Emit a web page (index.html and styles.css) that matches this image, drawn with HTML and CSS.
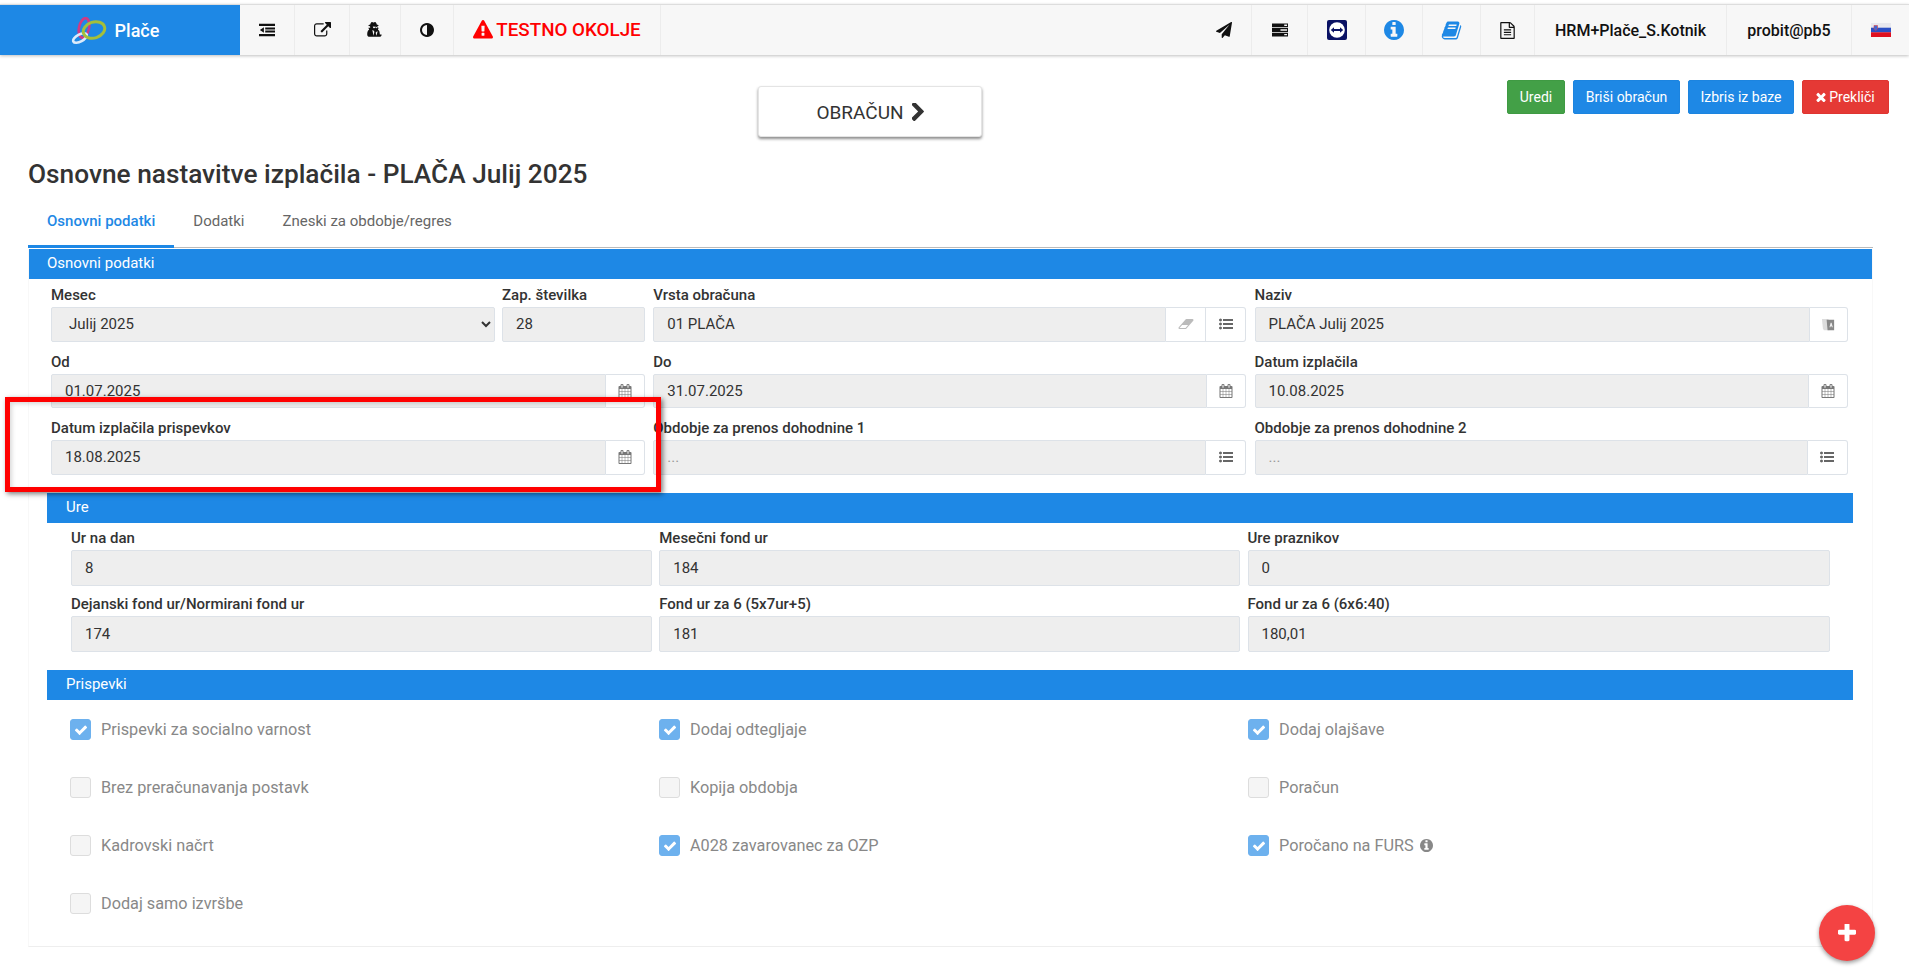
FILE: index.html
```html
<!DOCTYPE html>
<html>
<head>
<meta charset="utf-8" />
<title>Plače</title>
<link rel="stylesheet" href="styles.css">
</head>
<body>
<svg class="sprites" xmlns="http://www.w3.org/2000/svg">
  <symbol id="i-calendar" viewBox="0 0 1664 1792"><path d="M128 1664h288v-288h-288v288zm352 0h320v-288h-320v288zm-352-352h288v-320h-288v320zm352 0h320v-320h-320v320zm-352-384h288v-288h-288v288zm736 736h320v-288h-320v288zm-384-736h320v-288h-320v288zm768 736h288v-288h-288v288zm-384-352h320v-320h-320v320zm-352-864v-288q0-13-9.500-22.500t-22.500-9.500h-64q-13 0-22.500 9.500t-9.500 22.500v288q0 13 9.500 22.500t22.500 9.500h64q13 0 22.500-9.500t9.500-22.500zm736 864h288v-320h-288v320zm-384-384h320v-288h-320v288zm384 0h288v-288h-288v288zm32-480v-288q0-13-9.500-22.500t-22.500-9.500h-64q-13 0-22.500 9.500t-9.500 22.500v288q0 13 9.500 22.500t22.500 9.500h64q13 0 22.500-9.500t9.500-22.500zm384-64v1280q0 52-38 90t-90 38h-1408q-52 0-90-38t-38-90v-1280q0-52 38-90t90-38h128v-96q0-66 47-113t113-47h64q66 0 113 47t47 113v96h384v-96q0-66 47-113t113-47h64q66 0 113 47t47 113v96h128q52 0 90 38t38 90z"/></symbol>
  <symbol id="i-list" viewBox="0 0 1792 1792"><path d="M384 1408q0 80-56 136t-136 56-136-56-56-136 56-136 136-56 136 56 56 136zm0-512q0 80-56 136t-136 56-136-56-56-136 56-136 136-56 136 56 56 136zm1408 416v192q0 13-9.500 22.500t-22.500 9.500h-1216q-13 0-22.500-9.500t-9.500-22.500v-192q0-13 9.500-22.500t22.500-9.500h1216q13 0 22.500 9.500t9.500 22.500zm-1408-928q0 80-56 136t-136 56-136-56-56-136 56-136 136-56 136 56 56 136zm1408 416v192q0 13-9.500 22.500t-22.500 9.500h-1216q-13 0-22.500-9.500t-9.500-22.500v-192q0-13 9.500-22.500t22.500-9.500h1216q13 0 22.500 9.500t9.500 22.500zm0-512v192q0 13-9.500 22.500t-22.500 9.500h-1216q-13 0-22.500-9.500t-9.500-22.500v-192q0-13 9.500-22.500t22.500-9.500h1216q13 0 22.500 9.500t9.500 22.500z"/></symbol>
  <symbol id="i-info" viewBox="128 128 1536 1536"><path d="M1152 1376v-160q0-14-9-23t-23-9h-96v-512q0-14-9-23t-23-9h-320q-14 0-23 9t-9 23v160q0 14 9 23t23 9h96v320h-96q-14 0-23 9t-9 23v160q0 14 9 23t23 9h448q14 0 23-9t9-23zm-128-896v-160q0-14-9-23t-23-9h-192q-14 0-23 9t-9 23v160q0 14 9 23t23 9h192q14 0 23-9t9-23zm640 416q0 209-103 385.500t-279.500 279.500-385.500 103-385.500-103-279.500-279.500-103-385.500 103-385.500 279.500-279.500 385.500-103 385.500 103 279.500 279.500 103 385.500z"/></symbol>
  <symbol id="i-check" viewBox="0 0 1792 1792"><path d="M1671 566q0 40-28 68l-724 724-136 136q-28 28-68 28t-68-28l-136-136-362-362q-28-28-28-68t28-68l136-136q28-28 68-28t68 28l294 295 656-657q28-28 68-28t68 28l136 136q28 28 28 68z"/></symbol>
</svg>

<nav class="navbar">
  <div class="brand">
    <svg class="logo" viewBox="0 0 36 27">
      <ellipse cx="13" cy="11" rx="5" ry="10" transform="rotate(12 13 11)" fill="none" stroke="#d03a84" stroke-width="2.6"/>
      <ellipse cx="9" cy="21" rx="7.500" ry="3.500" transform="rotate(-28 9 21)" fill="none" stroke="#dcebfa" stroke-width="2.6"/>
      <ellipse cx="23" cy="13" rx="11" ry="8" transform="rotate(-18 23 13)" fill="none" stroke="#a5bf3a" stroke-width="3"/>
    </svg>
    <span>Plače</span>
  </div>
  <div class="nav-item w55">
    <svg class="ico" viewBox="0 0 18 16"><path d="M0 1h18v2.500H0zM7 5.200h11v2.200H7zM7 8.700h11v2.200H7zM0 12.500h18V15H0zM5.500 4.800v6.400L1 8z"/></svg>
  </div>
  <div class="nav-item w55">
    <svg class="ico ext" viewBox="0 0 1792 1792"><path d="M1408 928v320q0 119-84.500 203.500t-203.500 84.500h-832q-119 0-203.500-84.500t-84.500-203.500v-832q0-119 84.500-203.500t203.500-84.500h704q14 0 23 9t9 23v64q0 14-9 23t-23 9h-704q-66 0-113 47t-47 113v832q0 66 47 113t113 47h832q66 0 113-47t47-113v-320q0-14 9-23t23-9h64q14 0 23 9t9 23zm384-864v512q0 26-19 45t-45 19-45-19l-176-176-652 652q-10 10-23 10t-23-10l-114-114q-10-10-10-23t10-23l652-652-176-176q-19-19-19-45t19-45 45-19h512q26 0 45 19t19 45z"/></svg>
  </div>
  <div class="nav-item w51">
    <svg class="ico" viewBox="128 0 1536 1792"><path fill-rule="evenodd" d="M728 1536l96-448-96-128-128-64zm336 0l128-512-128 64-96 128zm160-1010q-2-4-4-6-10-8-96-8-70 0-167 19-7 2-21 2t-21-2q-97-19-167-19-86 0-96 8-2 2-4 6 2 18 4 27 2 3 7.500 6.500t7.500 10.500q2 4 7.500 20.500t7 20.500 7.500 17 8.500 17 9 14 12 13.500 14 9.500 17.500 8 20.500 4 24.500 2q36 0 59-12.500t32.500-30 14.500-34.500 11.500-29.500 17.500-12.500h12q11 0 17.500 12.500t11.500 29.500 14.500 34.500 32.500 30 59 12.500q13 0 24.500-2t20.500-4 17.500-8 14-9.500 12-13.500 9-14 8.500-17 7.500-17 7-20.500 7.500-20.500q2-7 7.500-10.500t7.500-6.500q2-9 4-27zm416 879q0 121-73 190t-194 69h-1082q-121 0-194-69t-73-190q0-61 4.500-118t19-125.500 37.500-123.500 63.500-103.500 93.500-74.500l-90-220h214q-22-64-22-128 0-12 2-32-194-40-194-96 0-57 210-99 17-62 51.500-134t70.500-114q32-37 76-37 30 0 84 31t84 31 84-31 84-31q44 0 76 36 36 42 70.500 114t51.500 134q210 42 210 99 0 56-194 96 7 81-20 160h214l-82 225q63 33 107.500 96.500t65.500 143.500 29 151.500 8 148.500z"/></svg>
  </div>
  <div class="nav-item w53">
    <svg class="ico adj" viewBox="128 128 1536 1536"><path d="M896 1440v-1088q-148 0-273 73t-198 198-73 273 73 273 198 198 273 73zm768-544q0 209-103 385.500t-279.500 279.500-385.500 103-385.500-103-279.500-279.500-103-385.500 103-385.500 279.500-279.500 385.500-103 385.500 103 279.500 279.500 103 385.500z"/></svg>
  </div>
  <div class="nav-item warn">
    <svg class="warn-ico" viewBox="0 0 1792 1792"><path d="M1024 1375v-190q0-14-9.500-23.500t-22.500-9.500h-192q-13 0-22.500 9.500t-9.500 23.500v190q0 14 9.500 23.500t22.500 9.500h192q13 0 22.500-9.500t9.500-23.500zm-2-374l18-459q0-12-10-19-13-11-24-11h-220q-11 0-24 11-10 7-10 21l17 457q0 10 10 16.500t24 6.500h185q14 0 23.500-6.500t10.500-16.500zm-14-934l768 1408q35 63-2 126-17 29-46.500 46t-63.500 17h-1536q-34 0-63.500-17t-46.500-46q-37-63-2-126l768-1408q17-31 47-49t65-18 65 18 47 49z"/></svg>
    <span>TESTNO OKOLJE</span>
  </div>

  <div class="nav-item right-start w56">
    <svg class="ico" viewBox="0 0 1792 1792"><path d="M1764 11q33 24 27 64l-256 1536q-5 29-32 45-14 8-31 8-11 0-24-5l-453-185-242 295q-18 23-49 23-13 0-22-4-19-7-30.500-23.500t-11.500-36.500v-349l864-1059-1069 925-395-162q-37-14-40-55-2-40 32-59l1664-960q15-9 32-9 20 0 36 11z"/></svg>
  </div>
  <div class="nav-item w56">
    <svg class="ico" viewBox="0 0 17 16"><path fill-rule="evenodd" d="M0 1h17v4H0zM13 2.200v1.500h3V2.200zM0 6h17v4H0zM9 7.200v1.500h7V7.200zM0 11h17v4H0zM13 12.200v1.500h3v-1.500z"/></svg>
  </div>
  <div class="nav-item w58">
    <svg class="tv" viewBox="0 0 20 20">
      <rect width="20" height="20" rx="2" fill="#0a1264"/>
      <circle cx="10" cy="10" r="7.800" fill="#fff"/>
      <path d="M3.800 10 7 7.300v1.800h6V7.300l3.200 2.700-3.200 2.700v-1.800H7v1.800z" fill="#0a1264"/>
    </svg>
  </div>
  <div class="nav-item w57">
    <svg class="info-big"><use href="#i-info"/></svg>
  </div>
  <div class="nav-item w58">
    <svg class="book" viewBox="0 0 1792 1792"><path d="M1703 478q40 57 18 129l-275 906q-19 64-76.500 107.500t-122.500 43.500h-923q-77 0-148.500-53.500t-99.500-131.500q-24-67-2-127 0-4 3-27t4-37q1-8-3-21.500t-3-19.500q2-11 8-21t16.500-23.500 16.500-23.500q23-38 45-91.500t30-91.500q3-10 .5-30t-.5-28q3-11 17-28t17-23q21-36 42-92t25-90q1-9-2.500-32t.5-28q4-13 22-30.500t22-22.500q19-26 42.500-84.500t27.500-96.500q1-8-3-25.500t-2-26.500q2-8 9-18t18-23 17-21q8-12 16.500-30.500t15-35 16-36 19.500-32 26.500-23.500 36-11.500 47.500 5.500l-1 3q38-9 51-9h761q74 0 114 56t18 130l-274 906q-36 119-71.500 153.500t-128.500 34.500h-869q-27 0-38 15-11 16-1 43 24 70 144 70h923q29 0 56-15.500t35-41.500l300-987q7-22 5-57 38 15 59 43zm-1064 2q-4 13 2 22.500t20 9.500h608q13 0 25.500-9.500t16.500-22.500l21-64q4-13-2-22.500t-20-9.500h-608q-13 0-25.500 9.500t-16.500 22.500zm-83 256q-4 13 2 22.500t20 9.500h608q13 0 25.500-9.500t16.500-22.500l21-64q4-13-2-22.500t-20-9.500h-608q-13 0-25.500 9.500t-16.500 22.500z"/></svg>
  </div>
  <div class="nav-item w54">
    <svg class="ico file" viewBox="128 0 1536 1792"><path d="M1596 380q28 28 48 76t20 88v1152q0 40-28 68t-68 28h-1344q-40 0-68-28t-28-68v-1600q0-40 28-68t68-28h896q40 0 88 20t76 48zm-444-244v376h376q-10-29-22-41l-313-313q-12-12-41-22zm384 1528v-1024h-416q-40 0-68-28t-28-68v-416h-768v1536h1280zm-1024-864q0-14 9-23t23-9h704q14 0 23 9t9 23v64q0 14-9 23t-23 9h-704q-14 0-23-9t-9-23v-64zm736 224q14 0 23 9t9 23v64q0 14-9 23t-23 9h-704q-14 0-23-9t-9-23v-64q0-14 9-23t23-9h704zm0 256q14 0 23 9t9 23v64q0 14-9 23t-23 9h-704q-14 0-23-9t-9-23v-64q0-14 9-23t23-9h704z"/></svg>
  </div>
  <div class="nav-item nav-text w192">HRM+Plače_S.Kotnik</div>
  <div class="nav-item nav-text w125">probit@pb5</div>
  <div class="nav-item flag-item">
    <svg class="flag" viewBox="0 0 20 14">
      <rect width="20" height="14" fill="#e8e8ee"/>
      <rect y="4.700" width="20" height="4.700" fill="#2b4fc4"/>
      <rect y="9.300" width="20" height="4.700" fill="#e01020"/>
      <path d="M3 2.500h3.500v3.500L4.750 7.500 3 6z" fill="#3d6ad6" stroke="#e04040" stroke-width=".6"/>
    </svg>
  </div>
</nav>

<div class="toolbar">
  <button class="obracun">OBRAČUN
    <svg class="chevron" viewBox="384 128 1000 1500"><path d="M1363 877l-742 742q-19 19-45 19t-45-19l-166-166q-19-19-19-45t19-45l531-531-531-531q-19-19-19-45t19-45l166-166q19-19 45-19t45 19l742 742q19 19 19 45t-19 45z"/></svg>
  </button>
  <div class="actions">
    <button class="btn green w58b">Uredi</button>
    <button class="btn blue-btn w107">Briši obračun</button>
    <button class="btn blue-btn w106">Izbris iz baze</button>
    <button class="btn red w87">
      <svg class="x" viewBox="256 256 1280 1280"><path d="M1490 1322q0 40-28 68l-136 136q-28 28-68 28t-68-28l-294-294-294 294q-28 28-68 28t-68-28l-136-136q-28-28-28-68t28-68l294-294-294-294q-28-28-28-68t28-68l136-136q28-28 68-28t68 28l294 294 294-294q28-28 68-28t68 28l136 136q28 28 28 68t-28 68l-294 294 294 294q28 28 28 68z"/></svg>
      Prekliči
    </button>
  </div>
</div>

<h1 class="page-title">Osnovne nastavitve izplačila - PLAČA Julij 2025</h1>

<div class="tabs">
  <a class="tab active">Osnovni podatki</a>
  <a class="tab">Dodatki</a>
  <a class="tab">Zneski za obdobje/regres</a>
</div>

<div class="panel">
  <div class="bar">Osnovni podatki</div>
  <div class="form-top">
    <div class="split">
      <div class="field">
        <label>Mesec</label>
        <select class="input"><option>Julij 2025</option></select>
      </div>
      <div class="field">
        <label>Zap. številka</label>
        <input class="input" readonly value="28">
      </div>
    </div>
    <div class="field">
      <label>Vrsta obračuna</label>
      <div class="group">
        <input class="input" readonly value="01 PLAČA">
        <span class="addon"><svg class="eraser" viewBox="0 0 2048 1792"><path d="M960 1408l336-384h-768l-336 384h768zm1013-1077q15 34 9.500 71.500t-30.500 65.500l-896 1024q-38 44-96 44h-768q-38 0-69.500-20.500t-47.500-54.500q-15-34-9.500-71.500t30.500-65.500l896-1024q38-44 96-44h768q38 0 69.500 20.500t47.500 54.500z"/></svg></span>
        <span class="addon"><svg class="add-ico"><use href="#i-list"/></svg></span>
      </div>
    </div>
    <div class="field">
      <label>Naziv</label>
      <div class="group">
        <input class="input" readonly value="PLAČA Julij 2025">
        <span class="addon lang-add"><svg class="lang" viewBox="0 0 16 16"><path d="M1 2h7l1 12H3l-1-2z" fill="#ddd"/><path d="M6 3h8v11H7z" fill="#888"/><path d="M9 11l1.300-5h1l1.300 5h-1l-.3-1.200h-1L10 11z" fill="#eee"/></svg></span>
      </div>
    </div>

    <div class="field">
      <label>Od</label>
      <div class="group">
        <input class="input" readonly value="01.07.2025">
        <span class="addon cal"><svg class="add-ico cal-ico"><use href="#i-calendar"/></svg></span>
      </div>
    </div>
    <div class="field">
      <label>Do</label>
      <div class="group">
        <input class="input" readonly value="31.07.2025">
        <span class="addon cal"><svg class="add-ico cal-ico"><use href="#i-calendar"/></svg></span>
      </div>
    </div>
    <div class="field">
      <label>Datum izplačila</label>
      <div class="group">
        <input class="input" readonly value="10.08.2025">
        <span class="addon cal"><svg class="add-ico cal-ico"><use href="#i-calendar"/></svg></span>
      </div>
    </div>

    <div class="field">
      <label>Datum izplačila prispevkov</label>
      <div class="group">
        <input class="input" readonly value="18.08.2025">
        <span class="addon cal"><svg class="add-ico cal-ico"><use href="#i-calendar"/></svg></span>
      </div>
    </div>
    <div class="field">
      <label>Obdobje za prenos dohodnine 1</label>
      <div class="group">
        <input class="input" readonly placeholder="...">
        <span class="addon"><svg class="add-ico"><use href="#i-list"/></svg></span>
      </div>
    </div>
    <div class="field">
      <label>Obdobje za prenos dohodnine 2</label>
      <div class="group">
        <input class="input" readonly placeholder="...">
        <span class="addon"><svg class="add-ico"><use href="#i-list"/></svg></span>
      </div>
    </div>
  </div>

  <div class="bar sub">Ure</div>
  <div class="form-ure">
    <div class="field"><label>Ur na dan</label><input class="input tall" readonly value="8"></div>
    <div class="field"><label>Mesečni fond ur</label><input class="input tall" readonly value="184"></div>
    <div class="field"><label>Ure praznikov</label><input class="input tall" readonly value="0"></div>
    <div class="field"><label>Dejanski fond ur/Normirani fond ur</label><input class="input tall" readonly value="174"></div>
    <div class="field"><label>Fond ur za 6 (5x7ur+5)</label><input class="input tall" readonly value="181"></div>
    <div class="field"><label>Fond ur za 6 (6x6:40)</label><input class="input tall" readonly value="180,01"></div>
  </div>

  <div class="bar sub">Prispevki</div>
  <div class="checks">
    <div class="check"><span class="box on"><svg><use href="#i-check"/></svg></span>Prispevki za socialno varnost</div>
    <div class="check"><span class="box on"><svg><use href="#i-check"/></svg></span>Dodaj odtegljaje</div>
    <div class="check"><span class="box on"><svg><use href="#i-check"/></svg></span>Dodaj olajšave</div>
    <div class="check"><span class="box"></span>Brez preračunavanja postavk</div>
    <div class="check"><span class="box"></span>Kopija obdobja</div>
    <div class="check"><span class="box"></span>Poračun</div>
    <div class="check"><span class="box"></span>Kadrovski načrt</div>
    <div class="check"><span class="box on"><svg><use href="#i-check"/></svg></span>A028 zavarovanec za OZP</div>
    <div class="check"><span class="box on"><svg><use href="#i-check"/></svg></span>Poročano na FURS <svg class="hint"><use href="#i-info"/></svg></div>
    <div class="check"><span class="box"></span>Dodaj samo izvršbe</div>
  </div>
</div>

<div class="highlight"></div>
<button class="fab">
  <svg viewBox="192 192 1408 1408"><path d="M1600 736v192q0 40-28 68t-68 28h-416v416q0 40-28 68t-68 28h-192q-40 0-68-28t-28-68v-416h-416q-40 0-68-28t-28-68v-192q0-40 28-68t68-28h416v-416q0-40 28-68t68-28h192q40 0 68 28t28 68v416h416q40 0 68 28t28 68z"/></svg>
</button>
</body>
</html>
```

FILE: styles.css
```css
* {
  box-sizing: border-box;
}
html, body {
  height: 100%;
}
body {
  margin: 0;
  font-family: Roboto, "Liberation Sans", sans-serif;
  font-size: 15px;
  color: #333;
  background: #fff;
  overflow: hidden;
  position: relative;
}
.sprites {
  display: none;
}

/* navbar */
.navbar {
  display: flex;
  height: 51px;
  margin-top: 4px;
  background: #f7f7f7;
  border-top: 1px solid #ddd;
  box-shadow: 0 1px 3px rgba(0, 0, 0, 0.25);
}
.brand {
  width: 240px;
  display: flex;
  align-items: center;
  justify-content: center;
  gap: 8px;
  padding-right: 10px;
  background: #1e88e5;
  color: #fff;
  font-size: 18px;
  font-weight: 500;
}
.logo {
  width: 36px;
  height: 27px;
}
.nav-item {
  display: flex;
  align-items: center;
  justify-content: center;
  border-right: 1px solid #ececec;
  color: #111;
}
.w51 { width: 51px; }
.w53 { width: 53px; }
.w54 { width: 54px; }
.w55 { width: 55px; }
.w56 { width: 56px; }
.w57 { width: 57px; }
.w58 { width: 58px; }
.w125 { width: 125px; }
.w192 { width: 192px; }
.right-start {
  margin-left: auto;
}
.ico {
  width: 16px;
  height: 16px;
  fill: #111;
}
.ico.ext {
  width: 17px;
  height: 17px;
}
.ico.adj {
  width: 14px;
  height: 14px;
}
.ico.file {
  width: 15px;
  height: 17px;
}
.info-big {
  width: 20px;
  height: 20px;
  fill: #1e88e5;
}
.book {
  width: 21px;
  height: 21px;
  fill: #1e88e5;
}
.warn {
  width: 207px;
  gap: 3px;
  color: #f00;
  font-size: 18.8px;
  font-weight: 500;
}
.warn-ico {
  width: 20px;
  height: 20px;
  fill: #f00;
}
.tv {
  width: 20px;
  height: 20px;
}
.nav-text {
  font-size: 16px;
  font-weight: 500;
}
.flag-item {
  width: 57px;
  border-right: 0;
}
.flag {
  width: 20px;
  height: 14px;
}

/* toolbar */
.toolbar {
  display: flex;
  align-items: flex-start;
  padding: 25px 20px 0 758px;
}
.obracun {
  width: 224px;
  height: 51px;
  margin-top: 6px;
  padding: 1px 0 0;
  display: flex;
  align-items: center;
  justify-content: center;
  gap: 8px;
  background: #fff;
  border: 1px solid #e4e4e4;
  border-radius: 3px;
  box-shadow: 0 2px 3px rgba(0, 0, 0, 0.45);
  font-family: inherit;
  font-size: 19px;
  color: #333;
}
.chevron {
  width: 12px;
  height: 18px;
  fill: #333;
}
.actions {
  display: flex;
  gap: 8px;
  margin-left: auto;
}
.btn {
  height: 34px;
  padding: 0;
  display: flex;
  align-items: center;
  justify-content: center;
  gap: 3px;
  border-radius: 2px;
  font-family: inherit;
  font-size: 14px;
  color: #fff;
}
.green { background: #43a047; border: 1px solid #3f9a43; }
.blue-btn { background: #1e88e5; border: 1px solid #1c84df; }
.red { background: #e53935; border: 1px solid #df3531; }
.w58b { width: 58px; }
.w107 { width: 107px; }
.w106 { width: 106px; }
.w87 { width: 87px; }
.x {
  width: 10px;
  height: 10px;
  fill: #fff;
}

/* heading and tabs */
.page-title {
  margin: 21px 0 0 28px;
  font-size: 26.25px;
  line-height: 32px;
  font-weight: 500;
  color: #333;
}
.tabs {
  display: flex;
  height: 41px;
  margin: 17px 0 0 28px;
  width: 1845px;
  border-bottom: 1px solid #bbb;
}
.tab {
  height: 41px;
  padding: 4px 19px 0;
  line-height: 20px;
  color: #666;
}
.tab.active {
  color: #1e88e5;
  font-weight: 500;
  border-bottom: 3px solid #1e88e5;
}

/* panel */
.panel {
  width: 1845px;
  margin: 1px 0 0 28px;
  border-left: 1px solid #f8f8f8;
  border-right: 1px solid #f8f8f8;
  border-bottom: 1px solid #eee;
}
.bar {
  height: 30px;
  padding-left: 18px;
  line-height: 29px;
  background: #1e88e5;
  color: #fff;
}
.bar.sub {
  margin: 0 19px 0 18px;
  padding-left: 19px;
}
.form-top {
  display: grid;
  grid-template-columns: 594px 593px 593px;
  column-gap: 8.25px;
  row-gap: 10px;
  padding: 6px 0 18px 22px;
}
.split {
  display: grid;
  grid-template-columns: 444px 143px;
  column-gap: 7px;
}
.field label {
  display: block;
  height: 20px;
  margin-bottom: 2px;
  line-height: 20px;
  font-weight: 500;
  color: #333;
  white-space: nowrap;
}
.input {
  display: block;
  width: 100%;
  height: 34.5px;
  padding: 0 13px;
  background: #eee;
  border: 1px solid #dde2e8;
  border-radius: 2px;
  font-family: inherit;
  font-size: 15px;
  color: #333;
  outline: 0;
}
.input::placeholder {
  color: #999;
}
.input.tall {
  height: 35.5px;
}
.group {
  display: flex;
}
.group .input {
  flex: 1;
  min-width: 0;
  border-radius: 2px 0 0 2px;
}
.addon {
  width: 40px;
  height: 34.5px;
  flex: none;
  display: flex;
  align-items: center;
  justify-content: center;
  background: #fff;
  border: 1px solid #dde2e8;
  border-left: 0;
}
.addon.cal {
  width: 39px;
}
.addon.lang-add {
  width: 38px;
}
.addon:last-child {
  border-radius: 0 3px 3px 0;
}
.add-ico {
  width: 14px;
  height: 14px;
  fill: #666;
}
.cal-ico {
  fill: #777;
}
.eraser {
  width: 16px;
  height: 14px;
  fill: #bbb;
}
.lang {
  width: 15px;
  height: 15px;
}
.form-ure {
  display: grid;
  grid-template-columns: 581px 581px 582px;
  column-gap: 7.25px;
  row-gap: 8.5px;
  padding: 5.5px 0 18.5px 42px;
}
.checks {
  display: grid;
  grid-template-columns: 589px 589px 589px;
  grid-auto-rows: 21px;
  row-gap: 37px;
  padding: 19px 0 32px 41px;
  font-size: 16.25px;
}
.check {
  display: flex;
  align-items: center;
  color: #888;
  line-height: 21px;
}
.box {
  width: 21px;
  height: 21px;
  margin-right: 10px;
  display: flex;
  align-items: center;
  justify-content: center;
  background: #f5f5f5;
  border: 1px solid #ddd;
  border-radius: 3px;
}
.box.on {
  background: #6db1ee;
  border-color: #6db1ee;
}
.box svg {
  width: 14px;
  height: 14px;
  fill: #fff;
}
.hint {
  width: 13px;
  height: 13px;
  margin-left: 6px;
  fill: #888;
}

/* things lying over the page */
.highlight {
  position: absolute;
  left: 5px;
  top: 397px;
  width: 656px;
  height: 95px;
  border: 5px solid #f00;
  box-shadow: 2px 2px 5px rgba(0, 0, 0, 0.5), inset 2px 2px 4px rgba(0, 0, 0, 0.15);
}
.fab {
  position: absolute;
  left: 1819px;
  top: 905px;
  width: 56px;
  height: 56px;
  padding: 0;
  display: flex;
  align-items: center;
  justify-content: center;
  background: #f44343;
  border: 0;
  border-radius: 50%;
  box-shadow: 0 2px 4px rgba(0, 0, 0, 0.4);
}
.fab svg {
  width: 18px;
  height: 18px;
  fill: #fff;
}
```
